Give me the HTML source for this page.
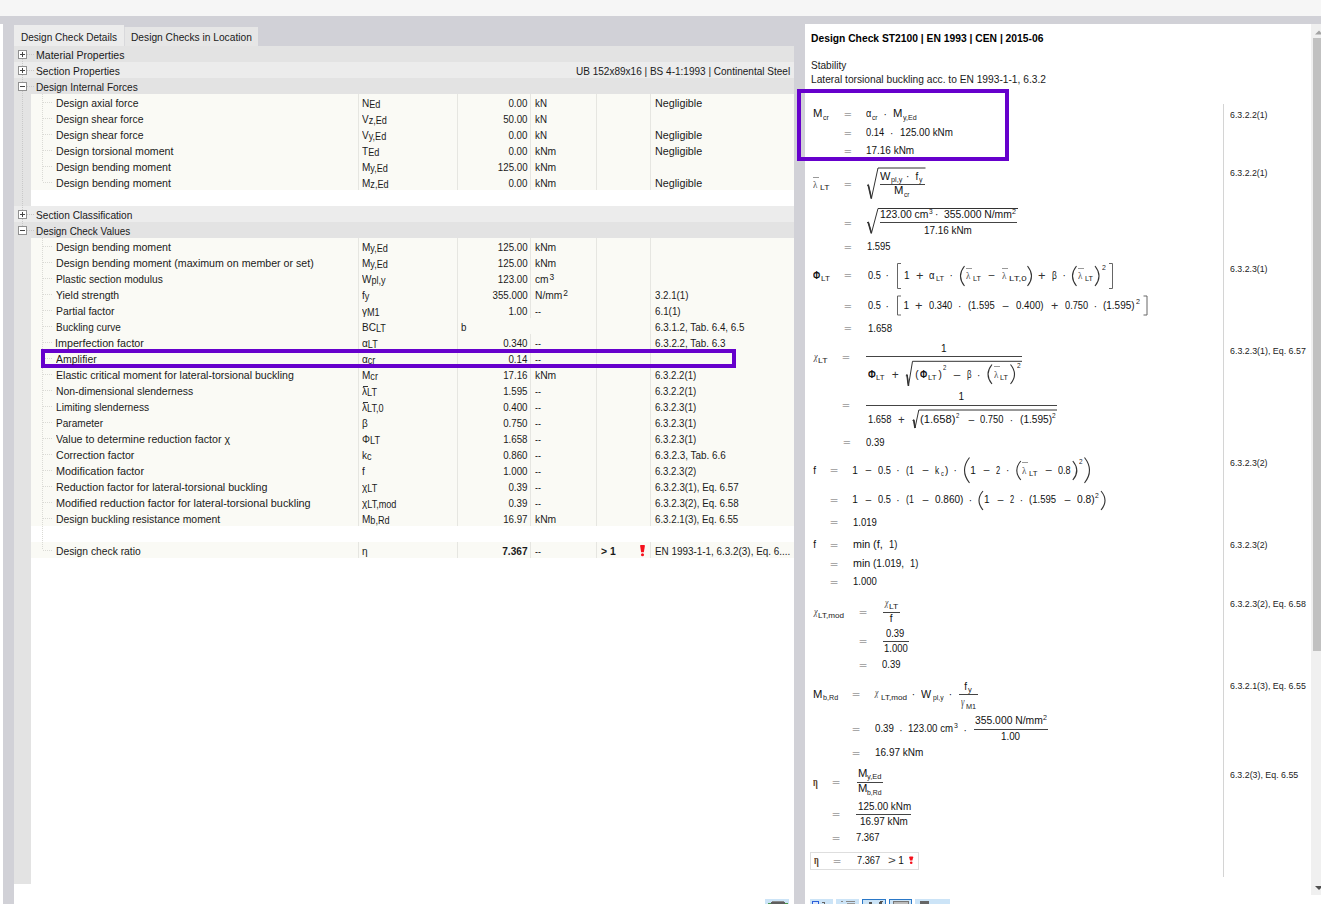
<!DOCTYPE html>
<html><head><meta charset="utf-8"><title>Design Check Details</title>
<style>
html,body{margin:0;padding:0;}
body{width:1321px;height:904px;position:relative;overflow:hidden;background:#fff;font-family:"Liberation Sans", sans-serif;}
.r{position:absolute;}
.t{position:absolute;white-space:pre;line-height:1;color:#1a1a1a;font-family:"Liberation Sans", sans-serif;}
.t sub,.t sup,.t i{font-style:normal;vertical-align:baseline;position:relative;line-height:1;}
svg{position:absolute;left:0;top:0;}
</style></head><body>
<div class="r" style="left:0px;top:0px;width:1321px;height:16px;background:#f6f6f6;"></div>
<div class="r" style="left:0px;top:16px;width:1321px;height:8px;background:#d1d1d7;"></div>
<div class="r" style="left:3px;top:24px;width:11px;height:880px;background:#d1d1d7;"></div>
<div class="r" style="left:14px;top:24px;width:780px;height:22px;background:#d1d1d7;"></div>
<div class="r" style="left:794px;top:24px;width:11px;height:880px;background:#d1d1d7;"></div>
<div class="r" style="left:14px;top:25px;width:110px;height:21px;background:#ececec;"></div>
<div class="r" style="left:124px;top:27px;width:134px;height:19px;background:#e6e6e6;border-left:1px solid #d9d9dc;box-sizing:border-box;"></div>
<div class="r" style="left:14px;top:46px;width:17px;height:838px;background:#e3e3e3;"></div>
<div class="r" style="left:14px;top:46px;width:780px;height:16px;background:#e3e3e3;"></div>
<div class="r" style="left:14px;top:62px;width:780px;height:16px;background:#ececec;"></div>
<div class="r" style="left:14px;top:78px;width:780px;height:16px;background:#e3e3e3;"></div>
<div class="r" style="left:14px;top:206px;width:780px;height:16px;background:#ececec;"></div>
<div class="r" style="left:14px;top:222px;width:780px;height:16px;background:#e3e3e3;"></div>
<div class="r" style="left:31px;top:94px;width:763px;height:16px;background:#fafaf5;"></div>
<div class="r" style="left:358px;top:94px;width:1px;height:16px;background:#e6e6e1;"></div>
<div class="r" style="left:457px;top:94px;width:1px;height:16px;background:#e6e6e1;"></div>
<div class="r" style="left:530px;top:94px;width:1px;height:16px;background:#e6e6e1;"></div>
<div class="r" style="left:596px;top:94px;width:1px;height:16px;background:#e6e6e1;"></div>
<div class="r" style="left:650px;top:94px;width:1px;height:16px;background:#e6e6e1;"></div>
<div class="r" style="left:31px;top:110px;width:763px;height:16px;background:#fafaf5;"></div>
<div class="r" style="left:358px;top:110px;width:1px;height:16px;background:#e6e6e1;"></div>
<div class="r" style="left:457px;top:110px;width:1px;height:16px;background:#e6e6e1;"></div>
<div class="r" style="left:530px;top:110px;width:1px;height:16px;background:#e6e6e1;"></div>
<div class="r" style="left:596px;top:110px;width:1px;height:16px;background:#e6e6e1;"></div>
<div class="r" style="left:650px;top:110px;width:1px;height:16px;background:#e6e6e1;"></div>
<div class="r" style="left:31px;top:126px;width:763px;height:16px;background:#fafaf5;"></div>
<div class="r" style="left:358px;top:126px;width:1px;height:16px;background:#e6e6e1;"></div>
<div class="r" style="left:457px;top:126px;width:1px;height:16px;background:#e6e6e1;"></div>
<div class="r" style="left:530px;top:126px;width:1px;height:16px;background:#e6e6e1;"></div>
<div class="r" style="left:596px;top:126px;width:1px;height:16px;background:#e6e6e1;"></div>
<div class="r" style="left:650px;top:126px;width:1px;height:16px;background:#e6e6e1;"></div>
<div class="r" style="left:31px;top:142px;width:763px;height:16px;background:#fafaf5;"></div>
<div class="r" style="left:358px;top:142px;width:1px;height:16px;background:#e6e6e1;"></div>
<div class="r" style="left:457px;top:142px;width:1px;height:16px;background:#e6e6e1;"></div>
<div class="r" style="left:530px;top:142px;width:1px;height:16px;background:#e6e6e1;"></div>
<div class="r" style="left:596px;top:142px;width:1px;height:16px;background:#e6e6e1;"></div>
<div class="r" style="left:650px;top:142px;width:1px;height:16px;background:#e6e6e1;"></div>
<div class="r" style="left:31px;top:158px;width:763px;height:16px;background:#fafaf5;"></div>
<div class="r" style="left:358px;top:158px;width:1px;height:16px;background:#e6e6e1;"></div>
<div class="r" style="left:457px;top:158px;width:1px;height:16px;background:#e6e6e1;"></div>
<div class="r" style="left:530px;top:158px;width:1px;height:16px;background:#e6e6e1;"></div>
<div class="r" style="left:596px;top:158px;width:1px;height:16px;background:#e6e6e1;"></div>
<div class="r" style="left:650px;top:158px;width:1px;height:16px;background:#e6e6e1;"></div>
<div class="r" style="left:31px;top:174px;width:763px;height:16px;background:#fafaf5;"></div>
<div class="r" style="left:358px;top:174px;width:1px;height:16px;background:#e6e6e1;"></div>
<div class="r" style="left:457px;top:174px;width:1px;height:16px;background:#e6e6e1;"></div>
<div class="r" style="left:530px;top:174px;width:1px;height:16px;background:#e6e6e1;"></div>
<div class="r" style="left:596px;top:174px;width:1px;height:16px;background:#e6e6e1;"></div>
<div class="r" style="left:650px;top:174px;width:1px;height:16px;background:#e6e6e1;"></div>
<div class="r" style="left:31px;top:238px;width:763px;height:16px;background:#fafaf5;"></div>
<div class="r" style="left:358px;top:238px;width:1px;height:16px;background:#e6e6e1;"></div>
<div class="r" style="left:457px;top:238px;width:1px;height:16px;background:#e6e6e1;"></div>
<div class="r" style="left:530px;top:238px;width:1px;height:16px;background:#e6e6e1;"></div>
<div class="r" style="left:596px;top:238px;width:1px;height:16px;background:#e6e6e1;"></div>
<div class="r" style="left:650px;top:238px;width:1px;height:16px;background:#e6e6e1;"></div>
<div class="r" style="left:31px;top:254px;width:763px;height:16px;background:#fafaf5;"></div>
<div class="r" style="left:358px;top:254px;width:1px;height:16px;background:#e6e6e1;"></div>
<div class="r" style="left:457px;top:254px;width:1px;height:16px;background:#e6e6e1;"></div>
<div class="r" style="left:530px;top:254px;width:1px;height:16px;background:#e6e6e1;"></div>
<div class="r" style="left:596px;top:254px;width:1px;height:16px;background:#e6e6e1;"></div>
<div class="r" style="left:650px;top:254px;width:1px;height:16px;background:#e6e6e1;"></div>
<div class="r" style="left:31px;top:270px;width:763px;height:16px;background:#fafaf5;"></div>
<div class="r" style="left:358px;top:270px;width:1px;height:16px;background:#e6e6e1;"></div>
<div class="r" style="left:457px;top:270px;width:1px;height:16px;background:#e6e6e1;"></div>
<div class="r" style="left:530px;top:270px;width:1px;height:16px;background:#e6e6e1;"></div>
<div class="r" style="left:596px;top:270px;width:1px;height:16px;background:#e6e6e1;"></div>
<div class="r" style="left:650px;top:270px;width:1px;height:16px;background:#e6e6e1;"></div>
<div class="r" style="left:31px;top:286px;width:763px;height:16px;background:#fafaf5;"></div>
<div class="r" style="left:358px;top:286px;width:1px;height:16px;background:#e6e6e1;"></div>
<div class="r" style="left:457px;top:286px;width:1px;height:16px;background:#e6e6e1;"></div>
<div class="r" style="left:530px;top:286px;width:1px;height:16px;background:#e6e6e1;"></div>
<div class="r" style="left:596px;top:286px;width:1px;height:16px;background:#e6e6e1;"></div>
<div class="r" style="left:650px;top:286px;width:1px;height:16px;background:#e6e6e1;"></div>
<div class="r" style="left:31px;top:302px;width:763px;height:16px;background:#fafaf5;"></div>
<div class="r" style="left:358px;top:302px;width:1px;height:16px;background:#e6e6e1;"></div>
<div class="r" style="left:457px;top:302px;width:1px;height:16px;background:#e6e6e1;"></div>
<div class="r" style="left:530px;top:302px;width:1px;height:16px;background:#e6e6e1;"></div>
<div class="r" style="left:596px;top:302px;width:1px;height:16px;background:#e6e6e1;"></div>
<div class="r" style="left:650px;top:302px;width:1px;height:16px;background:#e6e6e1;"></div>
<div class="r" style="left:31px;top:318px;width:763px;height:16px;background:#fafaf5;"></div>
<div class="r" style="left:358px;top:318px;width:1px;height:16px;background:#e6e6e1;"></div>
<div class="r" style="left:457px;top:318px;width:1px;height:16px;background:#e6e6e1;"></div>
<div class="r" style="left:596px;top:318px;width:1px;height:16px;background:#e6e6e1;"></div>
<div class="r" style="left:650px;top:318px;width:1px;height:16px;background:#e6e6e1;"></div>
<div class="r" style="left:31px;top:334px;width:763px;height:16px;background:#fafaf5;"></div>
<div class="r" style="left:358px;top:334px;width:1px;height:16px;background:#e6e6e1;"></div>
<div class="r" style="left:457px;top:334px;width:1px;height:16px;background:#e6e6e1;"></div>
<div class="r" style="left:530px;top:334px;width:1px;height:16px;background:#e6e6e1;"></div>
<div class="r" style="left:596px;top:334px;width:1px;height:16px;background:#e6e6e1;"></div>
<div class="r" style="left:650px;top:334px;width:1px;height:16px;background:#e6e6e1;"></div>
<div class="r" style="left:31px;top:350px;width:763px;height:16px;background:#fafaf5;"></div>
<div class="r" style="left:358px;top:350px;width:1px;height:16px;background:#e6e6e1;"></div>
<div class="r" style="left:457px;top:350px;width:1px;height:16px;background:#e6e6e1;"></div>
<div class="r" style="left:530px;top:350px;width:1px;height:16px;background:#e6e6e1;"></div>
<div class="r" style="left:596px;top:350px;width:1px;height:16px;background:#e6e6e1;"></div>
<div class="r" style="left:650px;top:350px;width:1px;height:16px;background:#e6e6e1;"></div>
<div class="r" style="left:31px;top:366px;width:763px;height:16px;background:#fafaf5;"></div>
<div class="r" style="left:358px;top:366px;width:1px;height:16px;background:#e6e6e1;"></div>
<div class="r" style="left:457px;top:366px;width:1px;height:16px;background:#e6e6e1;"></div>
<div class="r" style="left:530px;top:366px;width:1px;height:16px;background:#e6e6e1;"></div>
<div class="r" style="left:596px;top:366px;width:1px;height:16px;background:#e6e6e1;"></div>
<div class="r" style="left:650px;top:366px;width:1px;height:16px;background:#e6e6e1;"></div>
<div class="r" style="left:31px;top:382px;width:763px;height:16px;background:#fafaf5;"></div>
<div class="r" style="left:358px;top:382px;width:1px;height:16px;background:#e6e6e1;"></div>
<div class="r" style="left:457px;top:382px;width:1px;height:16px;background:#e6e6e1;"></div>
<div class="r" style="left:530px;top:382px;width:1px;height:16px;background:#e6e6e1;"></div>
<div class="r" style="left:596px;top:382px;width:1px;height:16px;background:#e6e6e1;"></div>
<div class="r" style="left:650px;top:382px;width:1px;height:16px;background:#e6e6e1;"></div>
<div class="r" style="left:362.6px;top:386px;width:5px;height:1px;background:#333;"></div>
<div class="r" style="left:31px;top:398px;width:763px;height:16px;background:#fafaf5;"></div>
<div class="r" style="left:358px;top:398px;width:1px;height:16px;background:#e6e6e1;"></div>
<div class="r" style="left:457px;top:398px;width:1px;height:16px;background:#e6e6e1;"></div>
<div class="r" style="left:530px;top:398px;width:1px;height:16px;background:#e6e6e1;"></div>
<div class="r" style="left:596px;top:398px;width:1px;height:16px;background:#e6e6e1;"></div>
<div class="r" style="left:650px;top:398px;width:1px;height:16px;background:#e6e6e1;"></div>
<div class="r" style="left:362.6px;top:402px;width:5px;height:1px;background:#333;"></div>
<div class="r" style="left:31px;top:414px;width:763px;height:16px;background:#fafaf5;"></div>
<div class="r" style="left:358px;top:414px;width:1px;height:16px;background:#e6e6e1;"></div>
<div class="r" style="left:457px;top:414px;width:1px;height:16px;background:#e6e6e1;"></div>
<div class="r" style="left:530px;top:414px;width:1px;height:16px;background:#e6e6e1;"></div>
<div class="r" style="left:596px;top:414px;width:1px;height:16px;background:#e6e6e1;"></div>
<div class="r" style="left:650px;top:414px;width:1px;height:16px;background:#e6e6e1;"></div>
<div class="r" style="left:31px;top:430px;width:763px;height:16px;background:#fafaf5;"></div>
<div class="r" style="left:358px;top:430px;width:1px;height:16px;background:#e6e6e1;"></div>
<div class="r" style="left:457px;top:430px;width:1px;height:16px;background:#e6e6e1;"></div>
<div class="r" style="left:530px;top:430px;width:1px;height:16px;background:#e6e6e1;"></div>
<div class="r" style="left:596px;top:430px;width:1px;height:16px;background:#e6e6e1;"></div>
<div class="r" style="left:650px;top:430px;width:1px;height:16px;background:#e6e6e1;"></div>
<div class="r" style="left:31px;top:446px;width:763px;height:16px;background:#fafaf5;"></div>
<div class="r" style="left:358px;top:446px;width:1px;height:16px;background:#e6e6e1;"></div>
<div class="r" style="left:457px;top:446px;width:1px;height:16px;background:#e6e6e1;"></div>
<div class="r" style="left:530px;top:446px;width:1px;height:16px;background:#e6e6e1;"></div>
<div class="r" style="left:596px;top:446px;width:1px;height:16px;background:#e6e6e1;"></div>
<div class="r" style="left:650px;top:446px;width:1px;height:16px;background:#e6e6e1;"></div>
<div class="r" style="left:31px;top:462px;width:763px;height:16px;background:#fafaf5;"></div>
<div class="r" style="left:358px;top:462px;width:1px;height:16px;background:#e6e6e1;"></div>
<div class="r" style="left:457px;top:462px;width:1px;height:16px;background:#e6e6e1;"></div>
<div class="r" style="left:530px;top:462px;width:1px;height:16px;background:#e6e6e1;"></div>
<div class="r" style="left:596px;top:462px;width:1px;height:16px;background:#e6e6e1;"></div>
<div class="r" style="left:650px;top:462px;width:1px;height:16px;background:#e6e6e1;"></div>
<div class="r" style="left:31px;top:478px;width:763px;height:16px;background:#fafaf5;"></div>
<div class="r" style="left:358px;top:478px;width:1px;height:16px;background:#e6e6e1;"></div>
<div class="r" style="left:457px;top:478px;width:1px;height:16px;background:#e6e6e1;"></div>
<div class="r" style="left:530px;top:478px;width:1px;height:16px;background:#e6e6e1;"></div>
<div class="r" style="left:596px;top:478px;width:1px;height:16px;background:#e6e6e1;"></div>
<div class="r" style="left:650px;top:478px;width:1px;height:16px;background:#e6e6e1;"></div>
<div class="r" style="left:31px;top:494px;width:763px;height:16px;background:#fafaf5;"></div>
<div class="r" style="left:358px;top:494px;width:1px;height:16px;background:#e6e6e1;"></div>
<div class="r" style="left:457px;top:494px;width:1px;height:16px;background:#e6e6e1;"></div>
<div class="r" style="left:530px;top:494px;width:1px;height:16px;background:#e6e6e1;"></div>
<div class="r" style="left:596px;top:494px;width:1px;height:16px;background:#e6e6e1;"></div>
<div class="r" style="left:650px;top:494px;width:1px;height:16px;background:#e6e6e1;"></div>
<div class="r" style="left:31px;top:510px;width:763px;height:16px;background:#fafaf5;"></div>
<div class="r" style="left:358px;top:510px;width:1px;height:16px;background:#e6e6e1;"></div>
<div class="r" style="left:457px;top:510px;width:1px;height:16px;background:#e6e6e1;"></div>
<div class="r" style="left:530px;top:510px;width:1px;height:16px;background:#e6e6e1;"></div>
<div class="r" style="left:596px;top:510px;width:1px;height:16px;background:#e6e6e1;"></div>
<div class="r" style="left:650px;top:510px;width:1px;height:16px;background:#e6e6e1;"></div>
<div class="r" style="left:31px;top:542px;width:763px;height:16px;background:#fafaf5;"></div>
<div class="r" style="left:358px;top:542px;width:1px;height:16px;background:#e6e6e1;"></div>
<div class="r" style="left:457px;top:542px;width:1px;height:16px;background:#e6e6e1;"></div>
<div class="r" style="left:530px;top:542px;width:1px;height:16px;background:#e6e6e1;"></div>
<div class="r" style="left:596px;top:542px;width:1px;height:16px;background:#e6e6e1;"></div>
<div class="r" style="left:650px;top:542px;width:1px;height:16px;background:#e6e6e1;"></div>
<div class="r" style="left:765px;top:899px;width:24px;height:5px;background:#cce4f7;"></div>
<div class="r" style="left:810px;top:899px;width:23px;height:5px;background:#cce4f7;"></div>
<div class="r" style="left:836px;top:899px;width:23px;height:5px;background:#cce4f7;"></div>
<div class="r" style="left:862px;top:899px;width:24px;height:5px;background:#cce4f7;box-sizing:border-box;border:1px solid #2a78c8;border-bottom:none;"></div>
<div class="r" style="left:889px;top:899px;width:23px;height:5px;background:#cce4f7;box-sizing:border-box;border:1px solid #2a78c8;border-bottom:none;"></div>
<div class="r" style="left:915px;top:899px;width:35px;height:5px;background:#cce4f7;"></div>
<div class="r" style="left:772px;top:901px;width:12px;height:1px;background:#8a8a8a;"></div>
<div class="r" style="left:771px;top:902px;width:14px;height:2px;background:#5f5f5f;"></div>
<div class="r" style="left:768px;top:903px;width:3px;height:1px;background:#4c9a4c;"></div>
<div class="r" style="left:785px;top:903px;width:3px;height:1px;background:#4c9a4c;"></div>
<div class="r" style="left:812px;top:901px;width:7px;height:5px;box-sizing:border-box;border:1px solid #2b5fd9;background:#dbe6fb"></div>
<div class="r" style="left:822px;top:902px;width:3px;height:1px;background:#666;"></div>
<div class="r" style="left:824px;top:903px;width:1px;height:1px;background:#666;"></div>
<div class="r" style="left:841px;top:901px;width:2px;height:1px;background:#888;"></div>
<div class="r" style="left:846px;top:901px;width:9px;height:1px;background:#888;"></div>
<div class="r" style="left:847px;top:903px;width:8px;height:1px;background:#999;"></div>
<div class="r" style="left:869px;top:902px;width:3px;height:2px;background:#555;"></div>
<div class="r" style="left:879px;top:902px;width:3px;height:2px;background:#555;"></div>
<div class="r" style="left:880px;top:901px;width:3px;height:1px;background:#555;"></div>
<div class="r" style="left:893px;top:901px;width:16px;height:5px;box-sizing:border-box;border:1px solid #777;background:#bbb"></div>
<div class="r" style="left:920px;top:901px;width:9px;height:3px;background:#666;"></div>
<div class="r" style="left:1311px;top:24px;width:10px;height:871px;background:#f0f0f0;"></div>
<div class="r" style="left:1313px;top:38px;width:8px;height:613px;background:#c1c1c1;"></div>
<div class="r" style="left:797px;top:89px;width:212px;height:72px;box-sizing:border-box;border:4px solid #6600cc;"></div>
<div class="r" style="left:1223px;top:104px;width:1px;height:773px;background:#d4d4d4;"></div>
<div class="r" style="left:813px;top:177px;width:6px;height:1px;background:#999;"></div>
<div class="r" style="left:879.5px;top:184px;width:45.5px;height:1px;background:#444;"></div>
<div class="r" style="left:879.5px;top:222px;width:137.5px;height:1px;background:#444;"></div>
<div class="r" style="left:966px;top:268px;width:6px;height:1px;background:#999;"></div>
<div class="r" style="left:1002px;top:268px;width:6px;height:1px;background:#999;"></div>
<div class="r" style="left:1078px;top:268px;width:6px;height:1px;background:#999;"></div>
<div class="r" style="left:866.3px;top:356px;width:155.70000000000005px;height:1px;background:#444;"></div>
<div class="r" style="left:993.8px;top:366px;width:6px;height:1px;background:#999;"></div>
<div class="r" style="left:866.3px;top:405px;width:190.70000000000005px;height:1px;background:#444;"></div>
<div class="r" style="left:1022px;top:462px;width:6px;height:1px;background:#999;"></div>
<div class="r" style="left:883px;top:612px;width:17px;height:1px;background:#444;"></div>
<div class="r" style="left:883px;top:641px;width:25.799999999999955px;height:1px;background:#444;"></div>
<div class="r" style="left:959.3px;top:694px;width:18.700000000000045px;height:1px;background:#444;"></div>
<div class="r" style="left:973.8px;top:729px;width:74.20000000000005px;height:1px;background:#444;"></div>
<div class="r" style="left:856.8px;top:782px;width:26.5px;height:1px;background:#444;"></div>
<div class="r" style="left:856.3px;top:814px;width:55.0px;height:1px;background:#444;"></div>
<div class="r" style="left:810px;top:852px;width:109px;height:18px;box-sizing:border-box;border:1px solid #dedede;background:#fff;"></div>
<svg width="1321" height="904" viewBox="0 0 1321 904" fill="none"><path d="M640.1 545.8 Q640.0 545 640.900 545 H644.099 Q645.0 545 644.9 545.8 L643.866 552.276 H641.133 Z" fill="#f5101c"/><circle cx="642.5" cy="554.688" r="1.511" fill="#f5101c"/><line x1="22.5" y1="59" x2="22.5" y2="226" stroke="#c9c9c9" stroke-width="1" stroke-dasharray="1 1"/><line x1="27" y1="54.5" x2="34" y2="54.5" stroke="#c9c9c9" stroke-width="1" stroke-dasharray="1 1"/><line x1="27" y1="70.5" x2="34" y2="70.5" stroke="#c9c9c9" stroke-width="1" stroke-dasharray="1 1"/><line x1="27" y1="86.5" x2="34" y2="86.5" stroke="#c9c9c9" stroke-width="1" stroke-dasharray="1 1"/><line x1="27" y1="214.5" x2="34" y2="214.5" stroke="#c9c9c9" stroke-width="1" stroke-dasharray="1 1"/><line x1="27" y1="230.5" x2="34" y2="230.5" stroke="#c9c9c9" stroke-width="1" stroke-dasharray="1 1"/><line x1="43" y1="102.5" x2="53" y2="102.5" stroke="#dadad5" stroke-width="1" stroke-dasharray="1 1"/><line x1="43" y1="118.5" x2="53" y2="118.5" stroke="#dadad5" stroke-width="1" stroke-dasharray="1 1"/><line x1="43" y1="134.5" x2="53" y2="134.5" stroke="#dadad5" stroke-width="1" stroke-dasharray="1 1"/><line x1="43" y1="150.5" x2="53" y2="150.5" stroke="#dadad5" stroke-width="1" stroke-dasharray="1 1"/><line x1="43" y1="166.5" x2="53" y2="166.5" stroke="#dadad5" stroke-width="1" stroke-dasharray="1 1"/><line x1="43" y1="182.5" x2="53" y2="182.5" stroke="#dadad5" stroke-width="1" stroke-dasharray="1 1"/><line x1="43" y1="246.5" x2="53" y2="246.5" stroke="#dadad5" stroke-width="1" stroke-dasharray="1 1"/><line x1="43" y1="262.5" x2="53" y2="262.5" stroke="#dadad5" stroke-width="1" stroke-dasharray="1 1"/><line x1="43" y1="278.5" x2="53" y2="278.5" stroke="#dadad5" stroke-width="1" stroke-dasharray="1 1"/><line x1="43" y1="294.5" x2="53" y2="294.5" stroke="#dadad5" stroke-width="1" stroke-dasharray="1 1"/><line x1="43" y1="310.5" x2="53" y2="310.5" stroke="#dadad5" stroke-width="1" stroke-dasharray="1 1"/><line x1="43" y1="326.5" x2="53" y2="326.5" stroke="#dadad5" stroke-width="1" stroke-dasharray="1 1"/><line x1="43" y1="342.5" x2="53" y2="342.5" stroke="#dadad5" stroke-width="1" stroke-dasharray="1 1"/><line x1="43" y1="358.5" x2="53" y2="358.5" stroke="#dadad5" stroke-width="1" stroke-dasharray="1 1"/><line x1="43" y1="374.5" x2="53" y2="374.5" stroke="#dadad5" stroke-width="1" stroke-dasharray="1 1"/><line x1="43" y1="390.5" x2="53" y2="390.5" stroke="#dadad5" stroke-width="1" stroke-dasharray="1 1"/><line x1="43" y1="406.5" x2="53" y2="406.5" stroke="#dadad5" stroke-width="1" stroke-dasharray="1 1"/><line x1="43" y1="422.5" x2="53" y2="422.5" stroke="#dadad5" stroke-width="1" stroke-dasharray="1 1"/><line x1="43" y1="438.5" x2="53" y2="438.5" stroke="#dadad5" stroke-width="1" stroke-dasharray="1 1"/><line x1="43" y1="454.5" x2="53" y2="454.5" stroke="#dadad5" stroke-width="1" stroke-dasharray="1 1"/><line x1="43" y1="470.5" x2="53" y2="470.5" stroke="#dadad5" stroke-width="1" stroke-dasharray="1 1"/><line x1="43" y1="486.5" x2="53" y2="486.5" stroke="#dadad5" stroke-width="1" stroke-dasharray="1 1"/><line x1="43" y1="502.5" x2="53" y2="502.5" stroke="#dadad5" stroke-width="1" stroke-dasharray="1 1"/><line x1="43" y1="518.5" x2="53" y2="518.5" stroke="#dadad5" stroke-width="1" stroke-dasharray="1 1"/><line x1="43" y1="550.5" x2="53" y2="550.5" stroke="#dadad5" stroke-width="1" stroke-dasharray="1 1"/><line x1="42.5" y1="94" x2="42.5" y2="182" stroke="#dadad5" stroke-width="1" stroke-dasharray="1 1"/><line x1="42.5" y1="238" x2="42.5" y2="550" stroke="#dadad5" stroke-width="1" stroke-dasharray="1 1"/><path d="M1315 34.5 L1319 30.5 L1323 34.5 Z" fill="#a3a3a3"/><path d="M1315 886 L1319 890 L1323 886 Z" fill="#505050"/><path d="M867 185.77 L868.3 184.51 L871.4 198.5 L878 168.0 H925.5" stroke="#333" stroke-width="1" stroke-linejoin="miter"/><path d="M868.2 184.825 L871.4 198.5" stroke="#333" stroke-width="1.6"/><path d="M867 222.964 L868.3 221.932 L871.4 233.3 L878 208.5 H1018" stroke="#333" stroke-width="1" stroke-linejoin="miter"/><path d="M868.2 222.19 L871.4 233.3" stroke="#333" stroke-width="1.6"/><path d="M901 263.5 H897.5 V288.5 H901" stroke="#666" stroke-width="1"/><path d="M964.5 266 Q956.5 276.0 964.5 286" stroke="#333" stroke-width="1.1"/><path d="M1027.5 266 Q1035.5 276.0 1027.5 286" stroke="#333" stroke-width="1.1"/><path d="M1076.5 266 Q1068.5 276.0 1076.5 286" stroke="#333" stroke-width="1.1"/><path d="M1095 266 Q1103 276.0 1095 286" stroke="#333" stroke-width="1.1"/><path d="M1109 263.5 H1112.5 V288.5 H1109" stroke="#666" stroke-width="1"/><path d="M901 296.0 H897.5 V315.0 H901" stroke="#666" stroke-width="1"/><path d="M1143.5 296.0 H1147.0 V315.0 H1143.5" stroke="#666" stroke-width="1"/><path d="M905.8 375.590 L907.099 374.57 L908.48 385.8 L912.5 361.3 H1022" stroke="#333" stroke-width="1" stroke-linejoin="miter"/><path d="M907.0 374.825 L908.48 385.8" stroke="#333" stroke-width="1.6"/><path d="M992 364.5 Q984 374.25 992 384" stroke="#333" stroke-width="1.1"/><path d="M1010.5 364.5 Q1018.5 374.25 1010.5 384" stroke="#333" stroke-width="1.1"/><path d="M912.5 420.52 L913.8 419.76 L915.02 428.0 L918.8 410.0 H1057" stroke="#333" stroke-width="1" stroke-linejoin="miter"/><path d="M913.7 419.95 L915.02 428.0" stroke="#333" stroke-width="1.6"/><path d="M969.5 457.5 Q959.5 470.25 969.5 483" stroke="#333" stroke-width="1.1"/><path d="M1020.8 461 Q1012.8 470.5 1020.8 480" stroke="#333" stroke-width="1.1"/><path d="M1072.8 461 Q1080.8 470.5 1072.8 480" stroke="#333" stroke-width="1.1"/><path d="M1084.5 457.5 Q1094.5 470.25 1084.5 483" stroke="#333" stroke-width="1.1"/><path d="M983 491 Q975 500.5 983 510" stroke="#333" stroke-width="1.1"/><path d="M1101 491 Q1109 500.5 1101 510" stroke="#333" stroke-width="1.1"/><path d="M909.199 857.3 Q909.099 856.5 910.0 856.5 H912.4 Q913.300 856.5 913.2 857.3 L912.371 860.508 H910.028 Z" fill="#f5101c"/><circle cx="911.2" cy="862.704" r="1.296" fill="#f5101c"/></svg>
<div class="r" style="left:18.0px;top:50.0px;width:9px;height:9px;box-sizing:border-box;border:1px solid #919191;background:#fff;"></div>
<div class="r" style="left:20.0px;top:54.0px;width:5px;height:1px;background:#444"></div>
<div class="r" style="left:22.0px;top:52.0px;width:1px;height:5px;background:#444"></div>
<div class="r" style="left:18.0px;top:66.0px;width:9px;height:9px;box-sizing:border-box;border:1px solid #919191;background:#fff;"></div>
<div class="r" style="left:20.0px;top:70.0px;width:5px;height:1px;background:#444"></div>
<div class="r" style="left:22.0px;top:68.0px;width:1px;height:5px;background:#444"></div>
<div class="r" style="left:18.0px;top:82.0px;width:9px;height:9px;box-sizing:border-box;border:1px solid #919191;background:#fff;"></div>
<div class="r" style="left:20.0px;top:86.0px;width:5px;height:1px;background:#444"></div>
<div class="r" style="left:18.0px;top:210.0px;width:9px;height:9px;box-sizing:border-box;border:1px solid #919191;background:#fff;"></div>
<div class="r" style="left:20.0px;top:214.0px;width:5px;height:1px;background:#444"></div>
<div class="r" style="left:22.0px;top:212.0px;width:1px;height:5px;background:#444"></div>
<div class="r" style="left:18.0px;top:226.0px;width:9px;height:9px;box-sizing:border-box;border:1px solid #919191;background:#fff;"></div>
<div class="r" style="left:20.0px;top:230.0px;width:5px;height:1px;background:#444"></div>
<div class="r" style="left:41px;top:349px;width:695px;height:19px;box-sizing:border-box;border:4px solid #6600cc;"></div>
<span class="t" style="left:20.90px;top:32px;font-size:11px;transform:scale(0.912,1.000);transform-origin:0.00px 9px;">Design Check Details</span>
<span class="t" style="left:130.50px;top:32px;font-size:11px;transform:scale(0.928,1.000);transform-origin:0.00px 9px;">Design Checks in Location</span>
<span class="t" style="left:36.30px;top:50px;font-size:11px;transform:scale(0.958,1.000);transform-origin:0.00px 9px;">Material Properties</span>
<span class="t" style="left:36.30px;top:66px;font-size:11px;transform:scale(0.933,1.000);transform-origin:0.00px 9px;">Section Properties</span>
<span class="t" style="left:36.30px;top:82px;font-size:11px;transform:scale(0.920,1.000);transform-origin:0.00px 9px;">Design Internal Forces</span>
<span class="t" style="left:36.30px;top:210px;font-size:11px;transform:scale(0.922,1.000);transform-origin:0.00px 9px;">Section Classification</span>
<span class="t" style="left:36.30px;top:226px;font-size:11px;transform:scale(0.902,1.000);transform-origin:0.00px 9px;">Design Check Values</span>
<span class="t" style="left:576.20px;top:66px;font-size:11px;transform:scale(0.911,1.000);transform-origin:0.00px 9px;">UB 152x89x16 | BS 4-1:1993 | Continental Steel</span>
<span class="t" style="left:56.30px;top:98px;font-size:11px;transform:scale(0.943,1.000);transform-origin:0.00px 9px;">Design axial force</span>
<span class="t" style="left:362.40px;top:98px;font-size:11px;transform:scale(0.910,1.000);transform-origin:0.00px 9px;">N<sub style="font-size:10px;top:1px">Ed</sub></span>
<span class="t" style="left:505.90px;top:98px;font-size:11px;transform:scale(0.886,1.000);transform-origin:21.41px 9px;">0.00</span>
<span class="t" style="left:534.80px;top:98px;font-size:11px;transform:scale(0.889,1.000);transform-origin:0.00px 9px;">kN</span>
<span class="t" style="left:654.80px;top:98px;font-size:11px;transform:scale(0.977,1.000);transform-origin:0.00px 9px;">Negligible</span>
<span class="t" style="left:56.30px;top:114px;font-size:11px;transform:scale(0.947,1.000);transform-origin:0.00px 9px;">Design shear force</span>
<span class="t" style="left:362.40px;top:114px;font-size:11px;transform:scale(0.910,1.000);transform-origin:0.00px 9px;">V<sub style="font-size:10px;top:1px">z,Ed</sub></span>
<span class="t" style="left:499.78px;top:114px;font-size:11px;transform:scale(0.886,1.000);transform-origin:27.53px 9px;">50.00</span>
<span class="t" style="left:534.80px;top:114px;font-size:11px;transform:scale(0.889,1.000);transform-origin:0.00px 9px;">kN</span>
<span class="t" style="left:56.30px;top:130px;font-size:11px;transform:scale(0.947,1.000);transform-origin:0.00px 9px;">Design shear force</span>
<span class="t" style="left:362.40px;top:130px;font-size:11px;transform:scale(0.910,1.000);transform-origin:0.00px 9px;">V<sub style="font-size:10px;top:1px">y,Ed</sub></span>
<span class="t" style="left:505.90px;top:130px;font-size:11px;transform:scale(0.886,1.000);transform-origin:21.41px 9px;">0.00</span>
<span class="t" style="left:534.80px;top:130px;font-size:11px;transform:scale(0.889,1.000);transform-origin:0.00px 9px;">kN</span>
<span class="t" style="left:654.80px;top:130px;font-size:11px;transform:scale(0.977,1.000);transform-origin:0.00px 9px;">Negligible</span>
<span class="t" style="left:56.30px;top:146px;font-size:11px;transform:scale(0.965,1.000);transform-origin:0.00px 9px;">Design torsional moment</span>
<span class="t" style="left:362.40px;top:146px;font-size:11px;transform:scale(0.910,1.000);transform-origin:0.00px 9px;">T<sub style="font-size:10px;top:1px">Ed</sub></span>
<span class="t" style="left:505.90px;top:146px;font-size:11px;transform:scale(0.886,1.000);transform-origin:21.41px 9px;">0.00</span>
<span class="t" style="left:534.80px;top:146px;font-size:11px;transform:scale(0.936,1.000);transform-origin:0.00px 9px;">kNm</span>
<span class="t" style="left:654.80px;top:146px;font-size:11px;transform:scale(0.977,1.000);transform-origin:0.00px 9px;">Negligible</span>
<span class="t" style="left:56.30px;top:162px;font-size:11px;transform:scale(0.964,1.000);transform-origin:0.00px 9px;">Design bending moment</span>
<span class="t" style="left:362.40px;top:162px;font-size:11px;transform:scale(0.910,1.000);transform-origin:0.00px 9px;">M<sub style="font-size:10px;top:1px">y,Ed</sub></span>
<span class="t" style="left:493.66px;top:162px;font-size:11px;transform:scale(0.886,1.000);transform-origin:33.64px 9px;">125.00</span>
<span class="t" style="left:534.80px;top:162px;font-size:11px;transform:scale(0.936,1.000);transform-origin:0.00px 9px;">kNm</span>
<span class="t" style="left:56.30px;top:178px;font-size:11px;transform:scale(0.964,1.000);transform-origin:0.00px 9px;">Design bending moment</span>
<span class="t" style="left:362.40px;top:178px;font-size:11px;transform:scale(0.910,1.000);transform-origin:0.00px 9px;">M<sub style="font-size:10px;top:1px">z,Ed</sub></span>
<span class="t" style="left:505.90px;top:178px;font-size:11px;transform:scale(0.886,1.000);transform-origin:21.41px 9px;">0.00</span>
<span class="t" style="left:534.80px;top:178px;font-size:11px;transform:scale(0.936,1.000);transform-origin:0.00px 9px;">kNm</span>
<span class="t" style="left:654.80px;top:178px;font-size:11px;transform:scale(0.977,1.000);transform-origin:0.00px 9px;">Negligible</span>
<span class="t" style="left:56.30px;top:242px;font-size:11px;transform:scale(0.964,1.000);transform-origin:0.00px 9px;">Design bending moment</span>
<span class="t" style="left:362.40px;top:242px;font-size:11px;transform:scale(0.910,1.000);transform-origin:0.00px 9px;">M<sub style="font-size:10px;top:1px">y,Ed</sub></span>
<span class="t" style="left:493.66px;top:242px;font-size:11px;transform:scale(0.886,1.000);transform-origin:33.64px 9px;">125.00</span>
<span class="t" style="left:534.80px;top:242px;font-size:11px;transform:scale(0.936,1.000);transform-origin:0.00px 9px;">kNm</span>
<span class="t" style="left:56.30px;top:258px;font-size:11px;transform:scale(0.967,1.000);transform-origin:0.00px 9px;">Design bending moment (maximum on member or set)</span>
<span class="t" style="left:362.40px;top:258px;font-size:11px;transform:scale(0.910,1.000);transform-origin:0.00px 9px;">M<sub style="font-size:10px;top:1px">y,Ed</sub></span>
<span class="t" style="left:493.66px;top:258px;font-size:11px;transform:scale(0.886,1.000);transform-origin:33.64px 9px;">125.00</span>
<span class="t" style="left:534.80px;top:258px;font-size:11px;transform:scale(0.936,1.000);transform-origin:0.00px 9px;">kNm</span>
<span class="t" style="left:56.30px;top:274px;font-size:11px;transform:scale(0.929,1.000);transform-origin:0.00px 9px;">Plastic section modulus</span>
<span class="t" style="left:362.40px;top:274px;font-size:11px;transform:scale(0.910,1.000);transform-origin:0.00px 9px;">W<sub style="font-size:10px;top:1px">pl,y</sub></span>
<span class="t" style="left:493.66px;top:274px;font-size:11px;transform:scale(0.886,1.000);transform-origin:33.64px 9px;">123.00</span>
<span class="t" style="left:534.80px;top:274px;font-size:11px;transform:scale(0.930,1.000);transform-origin:0.00px 9px;">cm<sup style="font-size:9px;top:-3px;margin-left:1px">3</sup></span>
<span class="t" style="left:56.30px;top:290px;font-size:11px;transform:scale(0.944,1.000);transform-origin:0.00px 9px;">Yield strength</span>
<span class="t" style="left:362.40px;top:290px;font-size:11px;transform:scale(0.910,1.000);transform-origin:0.00px 9px;">f<sub style="font-size:10px;top:1px">y</sub></span>
<span class="t" style="left:487.54px;top:290px;font-size:11px;transform:scale(0.886,1.000);transform-origin:39.76px 9px;">355.000</span>
<span class="t" style="left:534.80px;top:290px;font-size:11px;transform:scale(0.930,1.000);transform-origin:0.00px 9px;">N/mm<sup style="font-size:9px;top:-3px;margin-left:1px">2</sup></span>
<span class="t" style="left:654.80px;top:290px;font-size:11px;transform:scale(0.883,1.000);transform-origin:0.00px 9px;">3.2.1(1)</span>
<span class="t" style="left:56.30px;top:306px;font-size:11px;transform:scale(0.946,1.000);transform-origin:0.00px 9px;">Partial factor</span>
<span class="t" style="left:362.40px;top:306px;font-size:11px;transform:scale(0.910,1.000);transform-origin:0.00px 9px;">γ<sub style="font-size:10px;top:1px">M1</sub></span>
<span class="t" style="left:505.90px;top:306px;font-size:11px;transform:scale(0.886,1.000);transform-origin:21.41px 9px;">1.00</span>
<span class="t" style="left:534.80px;top:306px;font-size:11px;transform:scale(0.809,1.000);transform-origin:0.00px 9px;">--</span>
<span class="t" style="left:654.80px;top:306px;font-size:11px;transform:scale(0.891,1.000);transform-origin:0.00px 9px;">6.1(1)</span>
<span class="t" style="left:56.30px;top:322px;font-size:11px;transform:scale(0.906,1.000);transform-origin:0.00px 9px;">Buckling curve</span>
<span class="t" style="left:362.40px;top:322px;font-size:11px;transform:scale(0.910,1.000);transform-origin:0.00px 9px;">BC<sub style="font-size:10px;top:1px">LT</sub></span>
<span class="t" style="left:461.00px;top:322px;font-size:11px;transform:scale(0.886,1.000);transform-origin:0.00px 9px;">b</span>
<span class="t" style="left:654.80px;top:322px;font-size:11px;transform:scale(0.894,1.000);transform-origin:0.00px 9px;">6.3.1.2, Tab. 6.4, 6.5</span>
<span class="t" style="left:55.32px;top:338px;font-size:11px;transform:scale(0.976,1.000);transform-origin:0.00px 9px;">Imperfection factor</span>
<span class="t" style="left:362.40px;top:338px;font-size:11px;transform:scale(0.910,1.000);transform-origin:0.00px 9px;">α<sub style="font-size:10px;top:1px">LT</sub></span>
<span class="t" style="left:499.78px;top:338px;font-size:11px;transform:scale(0.886,1.000);transform-origin:27.53px 9px;">0.340</span>
<span class="t" style="left:534.80px;top:338px;font-size:11px;transform:scale(0.809,1.000);transform-origin:0.00px 9px;">--</span>
<span class="t" style="left:654.80px;top:338px;font-size:11px;transform:scale(0.894,1.000);transform-origin:0.00px 9px;">6.3.2.2, Tab. 6.3</span>
<span class="t" style="left:56.30px;top:354px;font-size:11px;transform:scale(0.951,1.000);transform-origin:0.00px 9px;">Amplifier</span>
<span class="t" style="left:362.40px;top:354px;font-size:11px;transform:scale(0.910,1.000);transform-origin:0.00px 9px;">α<sub style="font-size:10px;top:1px">cr</sub></span>
<span class="t" style="left:505.90px;top:354px;font-size:11px;transform:scale(0.886,1.000);transform-origin:21.41px 9px;">0.14</span>
<span class="t" style="left:534.80px;top:354px;font-size:11px;transform:scale(0.809,1.000);transform-origin:0.00px 9px;">--</span>
<span class="t" style="left:56.30px;top:370px;font-size:11px;transform:scale(0.963,1.000);transform-origin:0.00px 9px;">Elastic critical moment for lateral-torsional buckling</span>
<span class="t" style="left:362.40px;top:370px;font-size:11px;transform:scale(0.910,1.000);transform-origin:0.00px 9px;">M<sub style="font-size:10px;top:1px">cr</sub></span>
<span class="t" style="left:499.78px;top:370px;font-size:11px;transform:scale(0.886,1.000);transform-origin:27.53px 9px;">17.16</span>
<span class="t" style="left:534.80px;top:370px;font-size:11px;transform:scale(0.936,1.000);transform-origin:0.00px 9px;">kNm</span>
<span class="t" style="left:654.80px;top:370px;font-size:11px;transform:scale(0.875,1.000);transform-origin:0.00px 9px;">6.3.2.2(1)</span>
<span class="t" style="left:56.30px;top:386px;font-size:11px;transform:scale(0.946,1.000);transform-origin:0.00px 9px;">Non-dimensional slenderness</span>
<span class="t" style="left:362.40px;top:386px;font-size:11px;transform:scale(0.910,1.000);transform-origin:0.00px 9px;">λ<sub style="font-size:10px;top:1px">LT</sub></span>
<span class="t" style="left:499.78px;top:386px;font-size:11px;transform:scale(0.886,1.000);transform-origin:27.53px 9px;">1.595</span>
<span class="t" style="left:534.80px;top:386px;font-size:11px;transform:scale(0.809,1.000);transform-origin:0.00px 9px;">--</span>
<span class="t" style="left:654.80px;top:386px;font-size:11px;transform:scale(0.875,1.000);transform-origin:0.00px 9px;">6.3.2.2(1)</span>
<span class="t" style="left:56.30px;top:402px;font-size:11px;transform:scale(0.929,1.000);transform-origin:0.00px 9px;">Limiting slenderness</span>
<span class="t" style="left:362.40px;top:402px;font-size:11px;transform:scale(0.910,1.000);transform-origin:0.00px 9px;">λ<sub style="font-size:10px;top:1px">LT,0</sub></span>
<span class="t" style="left:499.78px;top:402px;font-size:11px;transform:scale(0.886,1.000);transform-origin:27.53px 9px;">0.400</span>
<span class="t" style="left:534.80px;top:402px;font-size:11px;transform:scale(0.809,1.000);transform-origin:0.00px 9px;">--</span>
<span class="t" style="left:654.80px;top:402px;font-size:11px;transform:scale(0.875,1.000);transform-origin:0.00px 9px;">6.3.2.3(1)</span>
<span class="t" style="left:56.30px;top:418px;font-size:11px;transform:scale(0.915,1.000);transform-origin:0.00px 9px;">Parameter</span>
<span class="t" style="left:362.40px;top:418px;font-size:11px;transform:scale(0.910,1.000);transform-origin:0.00px 9px;">β</span>
<span class="t" style="left:499.78px;top:418px;font-size:11px;transform:scale(0.886,1.000);transform-origin:27.53px 9px;">0.750</span>
<span class="t" style="left:534.80px;top:418px;font-size:11px;transform:scale(0.809,1.000);transform-origin:0.00px 9px;">--</span>
<span class="t" style="left:654.80px;top:418px;font-size:11px;transform:scale(0.875,1.000);transform-origin:0.00px 9px;">6.3.2.3(1)</span>
<span class="t" style="left:56.30px;top:434px;font-size:11px;transform:scale(0.971,1.000);transform-origin:0.00px 9px;">Value to determine reduction factor χ</span>
<span class="t" style="left:362.40px;top:434px;font-size:11px;transform:scale(0.910,1.000);transform-origin:0.00px 9px;">Φ<sub style="font-size:10px;top:1px">LT</sub></span>
<span class="t" style="left:499.78px;top:434px;font-size:11px;transform:scale(0.886,1.000);transform-origin:27.53px 9px;">1.658</span>
<span class="t" style="left:534.80px;top:434px;font-size:11px;transform:scale(0.809,1.000);transform-origin:0.00px 9px;">--</span>
<span class="t" style="left:654.80px;top:434px;font-size:11px;transform:scale(0.875,1.000);transform-origin:0.00px 9px;">6.3.2.3(1)</span>
<span class="t" style="left:56.30px;top:450px;font-size:11px;transform:scale(0.963,1.000);transform-origin:0.00px 9px;">Correction factor</span>
<span class="t" style="left:362.40px;top:450px;font-size:11px;transform:scale(0.910,1.000);transform-origin:0.00px 9px;">k<sub style="font-size:10px;top:1px">c</sub></span>
<span class="t" style="left:499.78px;top:450px;font-size:11px;transform:scale(0.886,1.000);transform-origin:27.53px 9px;">0.860</span>
<span class="t" style="left:534.80px;top:450px;font-size:11px;transform:scale(0.809,1.000);transform-origin:0.00px 9px;">--</span>
<span class="t" style="left:654.80px;top:450px;font-size:11px;transform:scale(0.898,1.000);transform-origin:0.00px 9px;">6.3.2.3, Tab. 6.6</span>
<span class="t" style="left:56.30px;top:466px;font-size:11px;transform:scale(0.986,1.000);transform-origin:0.00px 9px;">Modification factor</span>
<span class="t" style="left:362.40px;top:466px;font-size:11px;transform:scale(0.910,1.000);transform-origin:0.00px 9px;">f</span>
<span class="t" style="left:499.78px;top:466px;font-size:11px;transform:scale(0.886,1.000);transform-origin:27.53px 9px;">1.000</span>
<span class="t" style="left:534.80px;top:466px;font-size:11px;transform:scale(0.809,1.000);transform-origin:0.00px 9px;">--</span>
<span class="t" style="left:654.80px;top:466px;font-size:11px;transform:scale(0.875,1.000);transform-origin:0.00px 9px;">6.3.2.3(2)</span>
<span class="t" style="left:56.30px;top:482px;font-size:11px;transform:scale(0.971,1.000);transform-origin:0.00px 9px;">Reduction factor for lateral-torsional buckling</span>
<span class="t" style="left:362.40px;top:482px;font-size:11px;transform:scale(0.910,1.000);transform-origin:0.00px 9px;">χ<sub style="font-size:10px;top:1px">LT</sub></span>
<span class="t" style="left:505.90px;top:482px;font-size:11px;transform:scale(0.886,1.000);transform-origin:21.41px 9px;">0.39</span>
<span class="t" style="left:534.80px;top:482px;font-size:11px;transform:scale(0.809,1.000);transform-origin:0.00px 9px;">--</span>
<span class="t" style="left:654.80px;top:482px;font-size:11px;transform:scale(0.888,1.000);transform-origin:0.00px 9px;">6.3.2.3(1), Eq. 6.57</span>
<span class="t" style="left:56.30px;top:498px;font-size:11px;transform:scale(0.987,1.000);transform-origin:0.00px 9px;">Modified reduction factor for lateral-torsional buckling</span>
<span class="t" style="left:362.40px;top:498px;font-size:11px;transform:scale(0.910,1.000);transform-origin:0.00px 9px;">χ<sub style="font-size:10px;top:1px">LT,mod</sub></span>
<span class="t" style="left:505.90px;top:498px;font-size:11px;transform:scale(0.886,1.000);transform-origin:21.41px 9px;">0.39</span>
<span class="t" style="left:534.80px;top:498px;font-size:11px;transform:scale(0.809,1.000);transform-origin:0.00px 9px;">--</span>
<span class="t" style="left:654.80px;top:498px;font-size:11px;transform:scale(0.888,1.000);transform-origin:0.00px 9px;">6.3.2.3(2), Eq. 6.58</span>
<span class="t" style="left:56.30px;top:514px;font-size:11px;transform:scale(0.946,1.000);transform-origin:0.00px 9px;">Design buckling resistance moment</span>
<span class="t" style="left:362.40px;top:514px;font-size:11px;transform:scale(0.910,1.000);transform-origin:0.00px 9px;">M<sub style="font-size:10px;top:1px">b,Rd</sub></span>
<span class="t" style="left:499.78px;top:514px;font-size:11px;transform:scale(0.886,1.000);transform-origin:27.53px 9px;">16.97</span>
<span class="t" style="left:534.80px;top:514px;font-size:11px;transform:scale(0.936,1.000);transform-origin:0.00px 9px;">kNm</span>
<span class="t" style="left:654.80px;top:514px;font-size:11px;transform:scale(0.884,1.000);transform-origin:0.00px 9px;">6.3.2.1(3), Eq. 6.55</span>
<span class="t" style="left:56.30px;top:546px;font-size:11px;transform:scale(0.936,1.000);transform-origin:0.00px 9px;">Design check ratio</span>
<span class="t" style="left:362.40px;top:546px;font-size:11px;transform:scale(0.910,1.000);transform-origin:0.00px 9px;">η</span>
<span class="t" style="left:499.78px;top:546px;font-size:11px;font-weight:700;transform:scale(0.920,1.000);transform-origin:27.53px 9px;">7.367</span>
<span class="t" style="left:534.80px;top:546px;font-size:11px;transform:scale(0.809,1.000);transform-origin:0.00px 9px;">--</span>
<span class="t" style="left:654.80px;top:546px;font-size:11px;transform:scale(0.899,1.000);transform-origin:0.00px 9px;">EN 1993-1-1, 6.3.2(3), Eq. 6....</span>
<span class="t" style="left:600.50px;top:546px;font-size:11px;font-weight:700;transform:scale(0.943,1.000);transform-origin:0.00px 9px;">&gt; 1</span>
<span class="t" style="left:811.40px;top:33px;font-size:11px;font-weight:700;color:#000;transform:scale(0.936,1.000);transform-origin:0.00px 9px;">Design Check ST2100 | EN 1993 | CEN | 2015-06</span>
<span class="t" style="left:811.30px;top:60px;font-size:11px;transform:scale(0.915,1.000);transform-origin:0.00px 9px;">Stability</span>
<span class="t" style="left:811.30px;top:74px;font-size:11px;transform:scale(0.928,1.000);transform-origin:0.00px 9px;">Lateral torsional buckling acc. to EN 1993-1-1, 6.3.2</span>
<span class="t" style="left:1230.00px;top:110px;font-size:9.5px;color:#222;transform:scale(0.923,1.000);transform-origin:0.00px 8px;">6.3.2.2(1)</span>
<span class="t" style="left:1230.00px;top:168px;font-size:9.5px;color:#222;transform:scale(0.923,1.000);transform-origin:0.00px 8px;">6.3.2.2(1)</span>
<span class="t" style="left:1230.00px;top:264px;font-size:9.5px;color:#222;transform:scale(0.923,1.000);transform-origin:0.00px 8px;">6.3.2.3(1)</span>
<span class="t" style="left:1230.00px;top:346px;font-size:9.5px;color:#222;transform:scale(0.932,1.000);transform-origin:0.00px 8px;">6.3.2.3(1), Eq. 6.57</span>
<span class="t" style="left:1230.00px;top:458px;font-size:9.5px;color:#222;transform:scale(0.923,1.000);transform-origin:0.00px 8px;">6.3.2.3(2)</span>
<span class="t" style="left:1230.00px;top:540px;font-size:9.5px;color:#222;transform:scale(0.923,1.000);transform-origin:0.00px 8px;">6.3.2.3(2)</span>
<span class="t" style="left:1230.00px;top:599px;font-size:9.5px;color:#222;transform:scale(0.932,1.000);transform-origin:0.00px 8px;">6.3.2.3(2), Eq. 6.58</span>
<span class="t" style="left:1230.00px;top:681px;font-size:9.5px;color:#222;transform:scale(0.932,1.000);transform-origin:0.00px 8px;">6.3.2.1(3), Eq. 6.55</span>
<span class="t" style="left:1230.00px;top:770px;font-size:9.5px;color:#222;transform:scale(0.930,1.000);transform-origin:0.00px 8px;">6.3.2(3), Eq. 6.55</span>
<span class="t" style="left:813.00px;top:109px;font-size:10px;color:#111;transform:scale(1.125,1.000);transform-origin:0.00px 8px;">M</span>
<span class="t" style="left:822.50px;top:114px;font-size:7.5px;color:#222;transform:scale(0.933,1.000);transform-origin:0.00px 6px;">cr</span>
<span class="t" style="left:843.50px;top:109px;font-size:9.5px;color:#666;transform:scale(1.383,1.000);transform-origin:0.00px 8px;">=</span>
<span class="t" style="left:866.00px;top:109px;font-size:10px;color:#111;transform:scale(0.917,1.000);transform-origin:0.00px 8px;">α</span>
<span class="t" style="left:872.00px;top:114px;font-size:7.5px;color:#222;transform:scale(0.889,1.000);transform-origin:0.00px 6px;">cr</span>
<span class="t" style="left:883.50px;top:110px;font-size:10px;color:#111;">·</span>
<span class="t" style="left:893.00px;top:109px;font-size:10px;color:#111;transform:scale(1.125,1.000);transform-origin:0.00px 8px;">M</span>
<span class="t" style="left:902.50px;top:114px;font-size:7.5px;color:#222;transform:scale(0.945,1.000);transform-origin:0.00px 6px;">y,Ed</span>
<span class="t" style="left:843.50px;top:128px;font-size:9.5px;color:#666;transform:scale(1.383,1.000);transform-origin:0.00px 8px;">=</span>
<span class="t" style="left:866.00px;top:128px;font-size:10px;color:#111;transform:scale(0.930,1.000);transform-origin:0.00px 8px;">0.14</span>
<span class="t" style="left:890.00px;top:129px;font-size:10px;color:#111;">·</span>
<span class="t" style="left:899.50px;top:128px;font-size:10px;color:#111;transform:scale(0.980,1.000);transform-origin:0.00px 8px;">125.00 kNm</span>
<span class="t" style="left:843.50px;top:146px;font-size:9.5px;color:#666;transform:scale(1.383,1.000);transform-origin:0.00px 8px;">=</span>
<span class="t" style="left:866.00px;top:146px;font-size:10px;color:#111;transform:scale(0.995,1.000);transform-origin:0.00px 8px;">17.16 kNm</span>
<span class="t" style="left:813.00px;top:180px;font-size:10.5px;font-family:'Liberation Serif', serif;color:#4a4a4a;transform:scale(0.867,1.000);transform-origin:0.00px 8px;">λ</span>
<span class="t" style="left:819.60px;top:184px;font-size:7.5px;color:#222;transform:scale(1.149,1.000);transform-origin:0.00px 6px;">LT</span>
<span class="t" style="left:844.00px;top:179px;font-size:9.5px;color:#666;transform:scale(1.383,1.000);transform-origin:0.00px 8px;">=</span>
<span class="t" style="left:879.50px;top:172px;font-size:10px;color:#111;transform:scale(1.100,1.000);transform-origin:0.00px 8px;">W</span>
<span class="t" style="left:891.00px;top:176px;font-size:7.5px;color:#222;transform:scale(0.965,1.000);transform-origin:0.00px 6px;">pl,y</span>
<span class="t" style="left:906.00px;top:172px;font-size:10px;color:#111;">·</span>
<span class="t" style="left:915.50px;top:172px;font-size:10px;color:#111;">f</span>
<span class="t" style="left:919.30px;top:176px;font-size:7.5px;color:#222;transform:scale(0.925,1.000);transform-origin:0.00px 6px;">y</span>
<span class="t" style="left:894.00px;top:186px;font-size:10px;color:#111;transform:scale(1.125,1.000);transform-origin:0.00px 8px;">M</span>
<span class="t" style="left:903.50px;top:191px;font-size:7.5px;color:#222;transform:scale(0.859,1.000);transform-origin:0.00px 6px;">cr</span>
<span class="t" style="left:844.00px;top:218px;font-size:9.5px;color:#666;transform:scale(1.383,1.000);transform-origin:0.00px 8px;">=</span>
<span class="t" style="left:880.00px;top:210px;font-size:10px;color:#111;transform:scale(1.035,1.000);transform-origin:0.00px 8px;">123.00 cm</span>
<span class="t" style="left:928.50px;top:208px;font-size:7.5px;color:#222;transform:scale(0.875,1.000);transform-origin:0.00px 6px;">3</span>
<span class="t" style="left:935.00px;top:210px;font-size:10px;color:#111;">·</span>
<span class="t" style="left:943.50px;top:210px;font-size:10px;color:#111;transform:scale(1.034,1.000);transform-origin:0.00px 8px;">355.000 N/mm</span>
<span class="t" style="left:1011.50px;top:208px;font-size:7.5px;color:#222;transform:scale(0.950,1.000);transform-origin:0.00px 6px;">2</span>
<span class="t" style="left:924.30px;top:226px;font-size:10px;color:#111;transform:scale(0.989,1.000);transform-origin:0.00px 8px;">17.16 kNm</span>
<span class="t" style="left:844.00px;top:242px;font-size:9.5px;color:#666;transform:scale(1.383,1.000);transform-origin:0.00px 8px;">=</span>
<span class="t" style="left:867.00px;top:242px;font-size:10px;color:#111;transform:scale(0.943,1.000);transform-origin:0.00px 8px;">1.595</span>
<span class="t" style="left:813.00px;top:271px;font-size:10px;font-weight:700;color:#111;transform:scale(0.875,1.000);transform-origin:0.00px 8px;">Φ</span>
<span class="t" style="left:820.70px;top:275px;font-size:7.5px;color:#222;transform:scale(1.080,1.000);transform-origin:0.00px 6px;">LT</span>
<span class="t" style="left:844.00px;top:270px;font-size:9.5px;color:#666;transform:scale(1.383,1.000);transform-origin:0.00px 8px;">=</span>
<span class="t" style="left:867.50px;top:271px;font-size:10px;color:#111;transform:scale(0.927,1.000);transform-origin:0.00px 8px;">0.5</span>
<span class="t" style="left:885.50px;top:271px;font-size:10px;color:#111;">·</span>
<span class="t" style="left:904.00px;top:271px;font-size:10px;color:#111;">1</span>
<span class="t" style="left:915.50px;top:270px;font-size:12px;color:#333;transform:scale(1.071,1.000);transform-origin:0.00px 10px;">+</span>
<span class="t" style="left:929.30px;top:271px;font-size:10px;color:#111;transform:scale(0.950,1.000);transform-origin:0.00px 8px;">α</span>
<span class="t" style="left:935.50px;top:275px;font-size:7.5px;color:#222;transform:scale(0.987,1.000);transform-origin:0.00px 6px;">LT</span>
<span class="t" style="left:949.50px;top:271px;font-size:10px;color:#111;">·</span>
<span class="t" style="left:966.00px;top:271px;font-size:10.5px;font-family:'Liberation Serif', serif;color:#4a4a4a;transform:scale(0.867,1.000);transform-origin:0.00px 8px;">λ</span>
<span class="t" style="left:972.60px;top:275px;font-size:7.5px;color:#222;transform:scale(0.975,1.000);transform-origin:0.00px 6px;">LT</span>
<span class="t" style="left:988.40px;top:270px;font-size:11px;color:#333;transform:scale(1.083,1.000);transform-origin:0.00px 9px;">−</span>
<span class="t" style="left:1002.00px;top:271px;font-size:10.5px;font-family:'Liberation Serif', serif;color:#4a4a4a;transform:scale(0.867,1.000);transform-origin:0.00px 8px;">λ</span>
<span class="t" style="left:1008.60px;top:275px;font-size:7.5px;color:#222;transform:scale(1.294,1.000);transform-origin:0.00px 6px;">LT,0</span>
<span class="t" style="left:1038.00px;top:270px;font-size:12px;color:#333;transform:scale(1.071,1.000);transform-origin:0.00px 10px;">+</span>
<span class="t" style="left:1051.80px;top:271px;font-size:10px;color:#111;transform:scale(0.833,1.000);transform-origin:0.00px 8px;">β</span>
<span class="t" style="left:1062.50px;top:271px;font-size:10px;color:#111;">·</span>
<span class="t" style="left:1078.00px;top:271px;font-size:10.5px;font-family:'Liberation Serif', serif;color:#4a4a4a;transform:scale(0.867,1.000);transform-origin:0.00px 8px;">λ</span>
<span class="t" style="left:1084.60px;top:275px;font-size:7.5px;color:#222;transform:scale(0.975,1.000);transform-origin:0.00px 6px;">LT</span>
<span class="t" style="left:1101.80px;top:264px;font-size:7.5px;color:#222;transform:scale(0.925,1.000);transform-origin:0.00px 6px;">2</span>
<span class="t" style="left:844.00px;top:301px;font-size:9.5px;color:#666;transform:scale(1.383,1.000);transform-origin:0.00px 8px;">=</span>
<span class="t" style="left:867.50px;top:301px;font-size:10px;color:#111;transform:scale(0.927,1.000);transform-origin:0.00px 8px;">0.5</span>
<span class="t" style="left:885.50px;top:302px;font-size:10px;color:#111;">·</span>
<span class="t" style="left:903.50px;top:301px;font-size:10px;color:#111;">1</span>
<span class="t" style="left:915.00px;top:300px;font-size:12px;color:#333;transform:scale(1.071,1.000);transform-origin:0.00px 10px;">+</span>
<span class="t" style="left:928.80px;top:301px;font-size:10px;color:#111;transform:scale(0.931,1.000);transform-origin:0.00px 8px;">0.340</span>
<span class="t" style="left:958.00px;top:302px;font-size:10px;color:#111;">·</span>
<span class="t" style="left:968.00px;top:301px;font-size:10px;color:#111;transform:scale(0.938,1.000);transform-origin:0.00px 8px;">(1.595</span>
<span class="t" style="left:1002.20px;top:301px;font-size:11px;color:#333;transform:scale(1.100,1.000);transform-origin:0.00px 9px;">−</span>
<span class="t" style="left:1015.80px;top:301px;font-size:10px;color:#111;transform:scale(0.971,1.000);transform-origin:0.00px 8px;">0.400)</span>
<span class="t" style="left:1050.50px;top:300px;font-size:12px;color:#333;transform:scale(1.043,1.000);transform-origin:0.00px 10px;">+</span>
<span class="t" style="left:1064.50px;top:301px;font-size:10px;color:#111;transform:scale(0.923,1.000);transform-origin:0.00px 8px;">0.750</span>
<span class="t" style="left:1093.80px;top:302px;font-size:10px;color:#111;">·</span>
<span class="t" style="left:1103.30px;top:301px;font-size:10px;color:#111;transform:scale(0.995,1.000);transform-origin:0.00px 8px;">(1.595)</span>
<span class="t" style="left:1135.50px;top:298px;font-size:7.5px;color:#222;transform:scale(0.950,1.000);transform-origin:0.00px 6px;">2</span>
<span class="t" style="left:844.00px;top:323px;font-size:9.5px;color:#666;transform:scale(1.383,1.000);transform-origin:0.00px 8px;">=</span>
<span class="t" style="left:867.50px;top:324px;font-size:10px;color:#111;transform:scale(0.962,1.000);transform-origin:0.00px 8px;">1.658</span>
<span class="t" style="left:813.50px;top:352px;font-size:10.5px;font-family:'Liberation Serif', serif;color:#4a4a4a;transform:scale(0.800,1.000);transform-origin:0.00px 8px;font-style:italic;">χ</span>
<span class="t" style="left:818.00px;top:357px;font-size:7.5px;color:#222;transform:scale(1.161,1.000);transform-origin:0.00px 6px;">LT</span>
<span class="t" style="left:842.30px;top:352px;font-size:9.5px;color:#666;transform:scale(1.417,1.000);transform-origin:0.00px 8px;">=</span>
<span class="t" style="left:941.00px;top:344px;font-size:10px;color:#111;">1</span>
<span class="t" style="left:867.50px;top:370px;font-size:10px;font-weight:700;color:#111;transform:scale(0.938,1.000);transform-origin:0.00px 8px;">Φ</span>
<span class="t" style="left:875.60px;top:374px;font-size:7.5px;color:#222;transform:scale(1.033,1.000);transform-origin:0.00px 6px;">LT</span>
<span class="t" style="left:891.80px;top:369px;font-size:12px;color:#333;">+</span>
<span class="t" style="left:915.30px;top:370px;font-size:10px;color:#111;">(</span>
<span class="t" style="left:920.20px;top:370px;font-size:10px;font-weight:700;color:#111;transform:scale(0.875,1.000);transform-origin:0.00px 8px;">Φ</span>
<span class="t" style="left:928.00px;top:374px;font-size:7.5px;color:#222;transform:scale(1.045,1.000);transform-origin:0.00px 6px;">LT</span>
<span class="t" style="left:938.40px;top:370px;font-size:10px;color:#111;">)</span>
<span class="t" style="left:942.60px;top:364px;font-size:7.5px;color:#222;transform:scale(0.800,1.000);transform-origin:0.00px 6px;">2</span>
<span class="t" style="left:952.90px;top:370px;font-size:11px;color:#333;transform:scale(1.233,1.000);transform-origin:0.00px 9px;">−</span>
<span class="t" style="left:966.80px;top:370px;font-size:10px;color:#111;transform:scale(0.783,1.000);transform-origin:0.00px 8px;">β</span>
<span class="t" style="left:977.00px;top:371px;font-size:10px;color:#111;">·</span>
<span class="t" style="left:993.80px;top:370px;font-size:10.5px;font-family:'Liberation Serif', serif;color:#4a4a4a;transform:scale(0.867,1.000);transform-origin:0.00px 8px;">λ</span>
<span class="t" style="left:1000.40px;top:374px;font-size:7.5px;color:#222;transform:scale(0.975,1.000);transform-origin:0.00px 6px;">LT</span>
<span class="t" style="left:1017.00px;top:362px;font-size:7.5px;color:#222;transform:scale(0.875,1.000);transform-origin:0.00px 6px;">2</span>
<span class="t" style="left:842.30px;top:400px;font-size:9.5px;color:#666;transform:scale(1.417,1.000);transform-origin:0.00px 8px;">=</span>
<span class="t" style="left:958.50px;top:392px;font-size:10px;color:#111;">1</span>
<span class="t" style="left:867.50px;top:415px;font-size:10px;color:#111;transform:scale(0.935,1.000);transform-origin:0.00px 8px;">1.658</span>
<span class="t" style="left:898.30px;top:414px;font-size:12px;color:#333;transform:scale(0.957,1.000);transform-origin:0.00px 10px;">+</span>
<span class="t" style="left:920.00px;top:415px;font-size:10px;color:#111;transform:scale(1.116,1.000);transform-origin:0.00px 8px;">(1.658)</span>
<span class="t" style="left:956.30px;top:412px;font-size:7.5px;color:#222;transform:scale(0.800,1.000);transform-origin:0.00px 6px;">2</span>
<span class="t" style="left:967.60px;top:415px;font-size:11px;color:#333;transform:scale(1.050,1.000);transform-origin:0.00px 9px;">−</span>
<span class="t" style="left:980.00px;top:415px;font-size:10px;color:#111;transform:scale(0.935,1.000);transform-origin:0.00px 8px;">0.750</span>
<span class="t" style="left:1009.80px;top:416px;font-size:10px;color:#111;">·</span>
<span class="t" style="left:1019.50px;top:415px;font-size:10px;color:#111;transform:scale(1.014,1.000);transform-origin:0.00px 8px;">(1.595)</span>
<span class="t" style="left:1052.20px;top:412px;font-size:7.5px;color:#222;transform:scale(0.875,1.000);transform-origin:0.00px 6px;">2</span>
<span class="t" style="left:842.80px;top:437px;font-size:9.5px;color:#666;transform:scale(1.383,1.000);transform-origin:0.00px 8px;">=</span>
<span class="t" style="left:865.50px;top:438px;font-size:10px;color:#111;transform:scale(0.945,1.000);transform-origin:0.00px 8px;">0.39</span>
<span class="t" style="left:813.25px;top:466px;font-size:10px;color:#111;">f</span>
<span class="t" style="left:830.30px;top:465px;font-size:9.5px;color:#666;transform:scale(1.467,1.000);transform-origin:0.00px 8px;">=</span>
<span class="t" style="left:852.30px;top:466px;font-size:10px;color:#111;">1</span>
<span class="t" style="left:865.10px;top:465px;font-size:11px;color:#333;transform:scale(1.050,1.000);transform-origin:0.00px 9px;">−</span>
<span class="t" style="left:878.00px;top:466px;font-size:10px;color:#111;transform:scale(0.927,1.000);transform-origin:0.00px 8px;">0.5</span>
<span class="t" style="left:896.30px;top:466px;font-size:10px;color:#111;">·</span>
<span class="t" style="left:906.30px;top:466px;font-size:10px;color:#111;transform:scale(0.879,1.000);transform-origin:0.00px 8px;">(1</span>
<span class="t" style="left:922.10px;top:465px;font-size:11px;color:#333;transform:scale(1.083,1.000);transform-origin:0.00px 9px;">−</span>
<span class="t" style="left:935.00px;top:466px;font-size:10px;color:#111;transform:scale(0.833,1.000);transform-origin:0.00px 8px;">k</span>
<span class="t" style="left:940.80px;top:470px;font-size:7.5px;color:#222;transform:scale(0.750,1.000);transform-origin:0.00px 6px;">c</span>
<span class="t" style="left:945.10px;top:466px;font-size:10px;color:#111;">)</span>
<span class="t" style="left:953.50px;top:466px;font-size:10px;color:#111;">·</span>
<span class="t" style="left:970.30px;top:466px;font-size:10px;color:#111;">1</span>
<span class="t" style="left:983.40px;top:465px;font-size:11px;color:#333;transform:scale(1.083,1.000);transform-origin:0.00px 9px;">−</span>
<span class="t" style="left:996.30px;top:466px;font-size:10px;color:#111;transform:scale(0.750,1.000);transform-origin:0.00px 8px;">2</span>
<span class="t" style="left:1006.00px;top:466px;font-size:10px;color:#111;">·</span>
<span class="t" style="left:1022.00px;top:466px;font-size:10.5px;font-family:'Liberation Serif', serif;color:#4a4a4a;transform:scale(0.867,1.000);transform-origin:0.00px 8px;">λ</span>
<span class="t" style="left:1028.60px;top:470px;font-size:7.5px;color:#222;transform:scale(1.033,1.000);transform-origin:0.00px 6px;">LT</span>
<span class="t" style="left:1045.10px;top:465px;font-size:11px;color:#333;transform:scale(1.133,1.000);transform-origin:0.00px 9px;">−</span>
<span class="t" style="left:1058.30px;top:466px;font-size:10px;color:#111;transform:scale(0.907,1.000);transform-origin:0.00px 8px;">0.8</span>
<span class="t" style="left:1079.30px;top:458px;font-size:7.5px;color:#222;transform:scale(0.850,1.000);transform-origin:0.00px 6px;">2</span>
<span class="t" style="left:830.30px;top:495px;font-size:9.5px;color:#666;transform:scale(1.467,1.000);transform-origin:0.00px 8px;">=</span>
<span class="t" style="left:852.30px;top:495px;font-size:10px;color:#111;">1</span>
<span class="t" style="left:865.10px;top:495px;font-size:11px;color:#333;transform:scale(1.050,1.000);transform-origin:0.00px 9px;">−</span>
<span class="t" style="left:878.00px;top:495px;font-size:10px;color:#111;transform:scale(0.927,1.000);transform-origin:0.00px 8px;">0.5</span>
<span class="t" style="left:896.30px;top:496px;font-size:10px;color:#111;">·</span>
<span class="t" style="left:906.30px;top:495px;font-size:10px;color:#111;transform:scale(0.879,1.000);transform-origin:0.00px 8px;">(1</span>
<span class="t" style="left:922.10px;top:495px;font-size:11px;color:#333;transform:scale(1.083,1.000);transform-origin:0.00px 9px;">−</span>
<span class="t" style="left:935.00px;top:495px;font-size:10px;color:#111;">0.860)</span>
<span class="t" style="left:968.80px;top:496px;font-size:10px;color:#111;">·</span>
<span class="t" style="left:984.00px;top:495px;font-size:10px;color:#111;">1</span>
<span class="t" style="left:997.10px;top:495px;font-size:11px;color:#333;transform:scale(1.083,1.000);transform-origin:0.00px 9px;">−</span>
<span class="t" style="left:1010.00px;top:495px;font-size:10px;color:#111;transform:scale(0.750,1.000);transform-origin:0.00px 8px;">2</span>
<span class="t" style="left:1019.80px;top:496px;font-size:10px;color:#111;">·</span>
<span class="t" style="left:1029.30px;top:495px;font-size:10px;color:#111;transform:scale(0.955,1.000);transform-origin:0.00px 8px;">(1.595</span>
<span class="t" style="left:1064.10px;top:495px;font-size:11px;color:#333;transform:scale(1.083,1.000);transform-origin:0.00px 9px;">−</span>
<span class="t" style="left:1077.00px;top:495px;font-size:10px;color:#111;transform:scale(1.024,1.000);transform-origin:0.00px 8px;">0.8)</span>
<span class="t" style="left:1095.20px;top:492px;font-size:7.5px;color:#222;transform:scale(0.900,1.000);transform-origin:0.00px 6px;">2</span>
<span class="t" style="left:830.30px;top:517px;font-size:9.5px;color:#666;transform:scale(1.467,1.000);transform-origin:0.00px 8px;">=</span>
<span class="t" style="left:853.30px;top:518px;font-size:10px;color:#111;transform:scale(0.950,1.000);transform-origin:0.00px 8px;">1.019</span>
<span class="t" style="left:813.25px;top:540px;font-size:10px;color:#111;">f</span>
<span class="t" style="left:830.30px;top:540px;font-size:9.5px;color:#666;transform:scale(1.467,1.000);transform-origin:0.00px 8px;">=</span>
<span class="t" style="left:853.30px;top:540px;font-size:10px;color:#111;transform:scale(1.074,1.000);transform-origin:0.00px 8px;">min</span>
<span class="t" style="left:873.00px;top:540px;font-size:10px;color:#111;transform:scale(1.110,1.000);transform-origin:0.00px 8px;">(f,</span>
<span class="t" style="left:888.80px;top:540px;font-size:10px;color:#111;transform:scale(0.934,1.000);transform-origin:0.00px 8px;">1)</span>
<span class="t" style="left:830.30px;top:559px;font-size:9.5px;color:#666;transform:scale(1.467,1.000);transform-origin:0.00px 8px;">=</span>
<span class="t" style="left:853.30px;top:559px;font-size:10px;color:#111;transform:scale(1.074,1.000);transform-origin:0.00px 8px;">min</span>
<span class="t" style="left:873.00px;top:559px;font-size:10px;color:#111;">(1.019,</span>
<span class="t" style="left:910.00px;top:559px;font-size:10px;color:#111;transform:scale(0.934,1.000);transform-origin:0.00px 8px;">1)</span>
<span class="t" style="left:830.30px;top:577px;font-size:9.5px;color:#666;transform:scale(1.467,1.000);transform-origin:0.00px 8px;">=</span>
<span class="t" style="left:853.30px;top:577px;font-size:10px;color:#111;transform:scale(0.950,1.000);transform-origin:0.00px 8px;">1.000</span>
<span class="t" style="left:813.50px;top:607px;font-size:10.5px;font-family:'Liberation Serif', serif;color:#4a4a4a;transform:scale(0.800,1.000);transform-origin:0.00px 8px;font-style:italic;">χ</span>
<span class="t" style="left:818.00px;top:612px;font-size:7.5px;color:#222;transform:scale(1.081,1.000);transform-origin:0.00px 6px;">LT,mod</span>
<span class="t" style="left:858.50px;top:607px;font-size:9.5px;color:#666;transform:scale(1.467,1.000);transform-origin:0.00px 8px;">=</span>
<span class="t" style="left:884.75px;top:598px;font-size:10.5px;font-family:'Liberation Serif', serif;color:#4a4a4a;transform:scale(0.750,1.000);transform-origin:0.00px 8px;font-style:italic;">χ</span>
<span class="t" style="left:889.00px;top:603px;font-size:7.5px;color:#222;transform:scale(1.138,1.000);transform-origin:0.00px 6px;">LT</span>
<span class="t" style="left:889.75px;top:614px;font-size:10px;color:#111;">f</span>
<span class="t" style="left:858.50px;top:636px;font-size:9.5px;color:#666;transform:scale(1.467,1.000);transform-origin:0.00px 8px;">=</span>
<span class="t" style="left:886.30px;top:629px;font-size:10px;color:#111;transform:scale(0.940,1.000);transform-origin:0.00px 8px;">0.39</span>
<span class="t" style="left:883.80px;top:644px;font-size:10px;color:#111;transform:scale(0.950,1.000);transform-origin:0.00px 8px;">1.000</span>
<span class="t" style="left:858.50px;top:660px;font-size:9.5px;color:#666;transform:scale(1.467,1.000);transform-origin:0.00px 8px;">=</span>
<span class="t" style="left:882.00px;top:660px;font-size:10px;color:#111;transform:scale(0.945,1.000);transform-origin:0.00px 8px;">0.39</span>
<span class="t" style="left:813.00px;top:690px;font-size:10px;color:#111;transform:scale(1.125,1.000);transform-origin:0.00px 8px;">M</span>
<span class="t" style="left:822.50px;top:694px;font-size:7.5px;color:#222;transform:scale(0.957,1.000);transform-origin:0.00px 6px;">b,Rd</span>
<span class="t" style="left:852.00px;top:689px;font-size:9.5px;color:#666;transform:scale(1.467,1.000);transform-origin:0.00px 8px;">=</span>
<span class="t" style="left:875.45px;top:688px;font-size:10.5px;font-family:'Liberation Serif', serif;color:#4a4a4a;transform:scale(0.750,1.000);transform-origin:0.00px 8px;font-style:italic;">χ</span>
<span class="t" style="left:880.50px;top:694px;font-size:7.5px;color:#222;transform:scale(1.081,1.000);transform-origin:0.00px 6px;">LT,mod</span>
<span class="t" style="left:911.80px;top:690px;font-size:10px;color:#111;">·</span>
<span class="t" style="left:921.30px;top:690px;font-size:10px;color:#111;transform:scale(1.070,1.000);transform-origin:0.00px 8px;">W</span>
<span class="t" style="left:932.50px;top:694px;font-size:7.5px;color:#222;transform:scale(0.906,1.000);transform-origin:0.00px 6px;">pl,y</span>
<span class="t" style="left:948.80px;top:690px;font-size:10px;color:#111;">·</span>
<span class="t" style="left:964.30px;top:682px;font-size:10px;color:#111;">f</span>
<span class="t" style="left:968.00px;top:686px;font-size:7.5px;color:#222;">y</span>
<span class="t" style="left:961.25px;top:697px;font-size:11.5px;font-family:'Liberation Serif', serif;color:#4a4a4a;transform:scale(0.750,1.000);transform-origin:0.00px 9px;font-style:italic;">γ</span>
<span class="t" style="left:966.30px;top:703px;font-size:7.5px;color:#222;transform:scale(0.976,1.000);transform-origin:0.00px 6px;">M1</span>
<span class="t" style="left:852.00px;top:724px;font-size:9.5px;color:#666;transform:scale(1.467,1.000);transform-origin:0.00px 8px;">=</span>
<span class="t" style="left:875.00px;top:724px;font-size:10px;color:#111;transform:scale(0.970,1.000);transform-origin:0.00px 8px;">0.39</span>
<span class="t" style="left:899.30px;top:726px;font-size:10px;color:#111;">·</span>
<span class="t" style="left:908.30px;top:724px;font-size:10px;color:#111;transform:scale(0.964,1.000);transform-origin:0.00px 8px;">123.00 cm</span>
<span class="t" style="left:953.80px;top:722px;font-size:7.5px;color:#222;transform:scale(0.925,1.000);transform-origin:0.00px 6px;">3</span>
<span class="t" style="left:963.50px;top:726px;font-size:10px;color:#111;">·</span>
<span class="t" style="left:975.00px;top:716px;font-size:10px;color:#111;transform:scale(1.034,1.000);transform-origin:0.00px 8px;">355.000 N/mm</span>
<span class="t" style="left:1043.20px;top:714px;font-size:7.5px;color:#222;transform:scale(0.950,1.000);transform-origin:0.00px 6px;">2</span>
<span class="t" style="left:1001.30px;top:732px;font-size:10px;color:#111;transform:scale(0.980,1.000);transform-origin:0.00px 8px;">1.00</span>
<span class="t" style="left:852.00px;top:748px;font-size:9.5px;color:#666;transform:scale(1.467,1.000);transform-origin:0.00px 8px;">=</span>
<span class="t" style="left:875.00px;top:748px;font-size:10px;color:#111;">16.97 kNm</span>
<span class="t" style="left:812.80px;top:776px;font-size:12px;font-family:'Liberation Serif', serif;font-weight:700;color:#5a3d22;transform:scale(0.700,1.000);transform-origin:0.00px 10px;">η</span>
<span class="t" style="left:832.00px;top:777px;font-size:9.5px;color:#666;transform:scale(1.467,1.000);transform-origin:0.00px 8px;">=</span>
<span class="t" style="left:857.50px;top:769px;font-size:10px;color:#111;transform:scale(1.125,1.000);transform-origin:0.00px 8px;">M</span>
<span class="t" style="left:867.00px;top:773px;font-size:7.5px;color:#222;">y,Ed</span>
<span class="t" style="left:857.50px;top:784px;font-size:10px;color:#111;transform:scale(1.125,1.000);transform-origin:0.00px 8px;">M</span>
<span class="t" style="left:867.00px;top:789px;font-size:7.5px;color:#222;transform:scale(0.913,1.000);transform-origin:0.00px 6px;">b,Rd</span>
<span class="t" style="left:832.00px;top:809px;font-size:9.5px;color:#666;transform:scale(1.467,1.000);transform-origin:0.00px 8px;">=</span>
<span class="t" style="left:857.50px;top:802px;font-size:10px;color:#111;transform:scale(0.985,1.000);transform-origin:0.00px 8px;">125.00 kNm</span>
<span class="t" style="left:860.00px;top:817px;font-size:10px;color:#111;transform:scale(0.989,1.000);transform-origin:0.00px 8px;">16.97 kNm</span>
<span class="t" style="left:832.00px;top:833px;font-size:9.5px;color:#666;transform:scale(1.467,1.000);transform-origin:0.00px 8px;">=</span>
<span class="t" style="left:855.50px;top:833px;font-size:10px;color:#111;transform:scale(0.943,1.000);transform-origin:0.00px 8px;">7.367</span>
<span class="t" style="left:814.30px;top:854px;font-size:12px;font-family:'Liberation Serif', serif;font-weight:700;color:#5a3d22;transform:scale(0.700,1.000);transform-origin:0.00px 10px;">η</span>
<span class="t" style="left:833.30px;top:856px;font-size:9.5px;color:#666;transform:scale(1.467,1.000);transform-origin:0.00px 8px;">=</span>
<span class="t" style="left:857.00px;top:856px;font-size:10px;color:#111;transform:scale(0.923,1.000);transform-origin:0.00px 8px;">7.367</span>
<span class="t" style="left:888.00px;top:854px;font-size:12px;color:#444;transform:scale(1.114,0.875);transform-origin:0.00px 10px;">&gt;</span>
<span class="t" style="left:898.15px;top:856px;font-size:10px;color:#111;">1</span>
</body></html>
